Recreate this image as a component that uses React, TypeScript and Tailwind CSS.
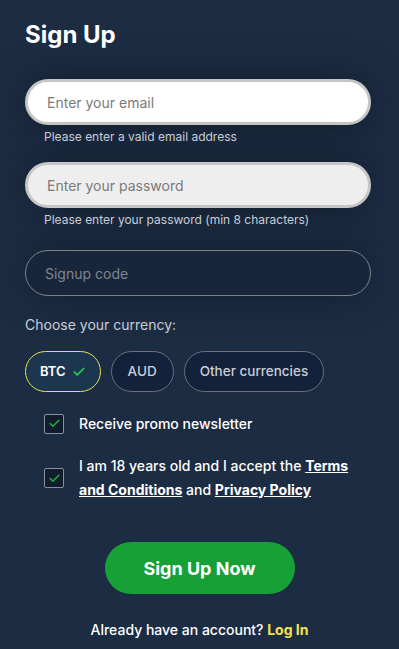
import { Check } from "lucide-react";

const font = { fontFamily: "Inter, 'Noto Sans', sans-serif" };

function Hint({ children }: { children: React.ReactNode }) {
  return <p className="mt-[4px] pl-[19px] text-[12px] leading-[16px] text-[#c9ced6]">{children}</p>;
}

function Box() {
  return (
    <span className="flex h-[20px] w-[20px] shrink-0 items-center justify-center rounded-[2px] border border-[#8a9099] bg-[#111d2c]">
      <Check className="h-[13px] w-[13px] text-[#1fae3e]" strokeWidth={3} />
    </span>
  );
}

export default function App() {
  return (
    <div className="min-h-[649px] w-full bg-[#1c2c43] pl-[25px] pr-[28px] pt-[20px]" style={font}>
      <h1 className="text-[24px] font-bold leading-[30px] text-white">Sign Up</h1>

      {/* Fields */}
      <div className="mt-[29px]">
        <div className="flex h-[46px] items-center rounded-full border-[3px] border-[#c6c6c6] bg-white px-[19px] shadow-[0_0_40px_rgba(0,0,0,0.35)]">
          <span className="text-[14px] text-[#7a7a7a]">Enter your email</span>
        </div>
        <Hint>Please enter a valid email address</Hint>

        <div className="mt-[17px] flex h-[46px] items-center rounded-full border-[3px] border-[#c6c6c6] bg-[#eeeeee] px-[19px] shadow-[0_0_40px_rgba(0,0,0,0.35)]">
          <span className="text-[14px] text-[#7a7a7a]">Enter your password</span>
        </div>
        <Hint>Please enter your password (min 8 characters)</Hint>

        <div className="mt-[22px] flex h-[46px] items-center rounded-full border border-[#7d848d] bg-[#17263a] px-[19px] shadow-[0_0_40px_rgba(0,0,0,0.3)]">
          <span className="text-[14px] text-[#7f8690]">Signup code</span>
        </div>
      </div>

      <p className="mt-[20px] text-[14px] leading-[18px] text-[#c9ced6]">Choose your currency:</p>

      {/* Currency */}
      <div className="mt-[17px] flex gap-[10px]">
        <button className="flex h-[41px] items-center gap-[6px] rounded-full border border-[#e6e34c] bg-[#1c3650] px-[14px] text-[13px] font-semibold text-white">
          BTC <Check className="h-[14px] w-[14px] text-[#22d04f]" strokeWidth={3} />
        </button>
        <button className="h-[41px] rounded-full border border-[#6b7079] bg-[#14213a] px-[16px] text-[13.5px] font-medium text-[#c9ced6]">
          AUD
        </button>
        <button className="h-[41px] rounded-full border border-[#6b7079] bg-[#14213a] px-[15px] text-[13.5px] font-medium text-[#c9ced6]">
          Other currencies
        </button>
      </div>

      {/* Checkboxes */}
      <div className="mt-[21px] pl-[19px]">
        <label className="flex items-center gap-[15px]">
          <Box />
          <span className="text-[14px] font-medium text-white">Receive promo newsletter</span>
        </label>
        <label className="mt-[20px] flex items-center gap-[15px]">
          <Box />
          <span className="text-[14px] font-medium leading-[24px] text-white">
            I am 18 years old and I accept the{" "}
            <a className="font-bold underline">Terms and Conditions</a> and{" "}
            <a className="font-bold underline">Privacy Policy</a>
          </span>
        </label>
      </div>

      <div className="mt-[40px] flex justify-center">
        <button className="ml-[3px] h-[52px] w-[190px] rounded-full bg-[#17a035] text-[18px] font-bold text-white">
          Sign Up Now
        </button>
      </div>

      <p className="ml-[3px] mt-[25px] text-center text-[14px] font-medium text-white">
        Already have an account? <a className="font-bold text-[#f5e14f]">Log In</a>
      </p>
    </div>
  );
}
